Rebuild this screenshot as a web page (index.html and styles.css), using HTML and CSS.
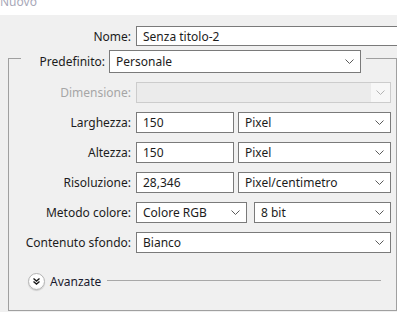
FILE: index.html
```html
<!DOCTYPE html>
<html lang="it">
<head>
<meta charset="utf-8">
<title>Nuovo</title>
<link rel="stylesheet" href="styles.css">
</head>
<body>
<div class="titlebar"><span class="title-text">Nuovo</span></div>

<div class="row nome-row">
  <span class="label nome-label">Nome:</span>
  <div class="field input nome-input">Senza titolo-2</div>
</div>

<div class="group">
  <div class="legend">
    <span class="label legend-label">Predefinito:</span>
    <div class="field select preset">
      <span class="value">Personale</span>
      <svg class="chev" width="9" height="5" viewBox="0 0 9 5"><path d="M0.5 0.5 L4.5 4.5 L8.5 0.5" fill="none" stroke="#5a5a5a" stroke-width="1"/></svg>
    </div>
  </div>

  <div class="rows">
    <div class="row">
      <span class="label disabled">Dimensione:</span>
      <div class="field select wide dis">
        <span class="value"></span>
        <span class="dis-arrow"><svg width="9" height="5" viewBox="0 0 9 5"><path d="M0.5 0.5 L4.5 4.5 L8.5 0.5" fill="none" stroke="#b4b4b4" stroke-width="1"/></svg></span>
      </div>
    </div>

    <div class="row">
      <span class="label">Larghezza:</span>
      <div class="field input num">150</div>
      <div class="field select unit">
        <span class="value">Pixel</span>
        <svg class="chev" width="9" height="5" viewBox="0 0 9 5"><path d="M0.5 0.5 L4.5 4.5 L8.5 0.5" fill="none" stroke="#5a5a5a" stroke-width="1"/></svg>
      </div>
    </div>

    <div class="row">
      <span class="label">Altezza:</span>
      <div class="field input num">150</div>
      <div class="field select unit">
        <span class="value">Pixel</span>
        <svg class="chev" width="9" height="5" viewBox="0 0 9 5"><path d="M0.5 0.5 L4.5 4.5 L8.5 0.5" fill="none" stroke="#5a5a5a" stroke-width="1"/></svg>
      </div>
    </div>

    <div class="row">
      <span class="label">Risoluzione:</span>
      <div class="field input num">28,346</div>
      <div class="field select unit">
        <span class="value">Pixel/centimetro</span>
        <svg class="chev" width="9" height="5" viewBox="0 0 9 5"><path d="M0.5 0.5 L4.5 4.5 L8.5 0.5" fill="none" stroke="#5a5a5a" stroke-width="1"/></svg>
      </div>
    </div>

    <div class="row">
      <span class="label">Metodo colore:</span>
      <div class="field select mode">
        <span class="value">Colore RGB</span>
        <svg class="chev" width="9" height="5" viewBox="0 0 9 5"><path d="M0.5 0.5 L4.5 4.5 L8.5 0.5" fill="none" stroke="#5a5a5a" stroke-width="1"/></svg>
      </div>
      <div class="field select bits">
        <span class="value">8 bit</span>
        <svg class="chev" width="9" height="5" viewBox="0 0 9 5"><path d="M0.5 0.5 L4.5 4.5 L8.5 0.5" fill="none" stroke="#5a5a5a" stroke-width="1"/></svg>
      </div>
    </div>

    <div class="row">
      <span class="label">Contenuto sfondo:</span>
      <div class="field select wide">
        <span class="value">Bianco</span>
        <svg class="chev" width="9" height="5" viewBox="0 0 9 5"><path d="M0.5 0.5 L4.5 4.5 L8.5 0.5" fill="none" stroke="#5a5a5a" stroke-width="1"/></svg>
      </div>
    </div>
  </div>

  <div class="advanced">
    <span class="adv-btn"><svg width="9" height="9" viewBox="0 0 9 9"><path d="M1.5 1.5 L4.5 4 L7.5 1.5 M1.5 4.5 L4.5 7 L7.5 4.5" fill="none" stroke="#1a1a1a" stroke-width="1.4"/></svg></span>
    <span class="adv-text">Avanzate</span>
    <span class="adv-line"></span>
  </div>
</div>
</body>
</html>
```

FILE: styles.css
```css
html, body {
  margin: 0;
  padding: 0;
}

body {
  width: 397px;
  height: 312px;
  overflow: hidden;
  background: #f0f0f0;
  font-family: "Noto Sans", "Open Sans", sans-serif;
  font-size: 12px;
  color: #1c1c1c;
}

.titlebar {
  height: 15px;
  background: #ffffff;
  overflow: hidden;
}

.title-text {
  display: block;
  margin-top: -6px;
  line-height: 16px;
  font-size: 12px;
  color: #a8a8b8;
}

.row {
  display: flex;
  align-items: center;
}

.label {
  flex: none;
  text-align: right;
  white-space: nowrap;
}

.label.disabled {
  color: #a6a6a6;
}

.nome-row {
  margin-top: 11px;
}

.nome-label {
  width: 131px;
  margin-right: 5px;
}

.field {
  flex: none;
  box-sizing: border-box;
  height: 21px;
  border: 1px solid #7a7a7a;
  background: #ffffff;
  display: flex;
  align-items: center;
  padding-left: 6px;
  white-space: nowrap;
  overflow: hidden;
}

.nome-input {
  height: 20px;
  width: 270px;
  border-right: none;
}

.select .value {
  flex: 1;
}

.select .chev {
  flex: none;
  margin-right: 6px;
}

.group {
  box-sizing: border-box;
  margin: 12px 0 0 8px;
  width: 389px;
  height: 253px;
  border: 1px solid #a0a0a0;
}

.legend {
  display: flex;
  align-items: center;
  width: max-content;
  margin: -9px 0 0 12px;
  padding: 0 5px;
  background: #f0f0f0;
}

.legend-label {
  width: 79px;
  margin-right: 4px;
}

.preset {
  width: 252px;
  height: 23px;
}

.rows {
  display: flex;
  flex-direction: column;
  gap: 9px;
  margin-top: 9px;
}

.rows .label {
  width: 122px;
  margin-right: 5px;
}

.wide {
  width: 255px;
}

.num {
  width: 98px;
  margin-right: 4px;
}

.unit {
  width: 153px;
}

.mode {
  width: 111px;
  margin-right: 7px;
}

.bits {
  width: 137px;
}

.field.dis {
  border-color: #cccccc;
  background: #ebebeb;
  padding-left: 0;
}

.dis-arrow {
  flex: none;
  align-self: stretch;
  width: 19px;
  background: #f7f7f7;
  display: flex;
  align-items: center;
  justify-content: center;
}

.advanced {
  display: flex;
  align-items: center;
  margin-top: 20px;
  height: 17px;
}

.adv-btn {
  flex: none;
  box-sizing: border-box;
  width: 17px;
  height: 17px;
  margin-left: 19px;
  border-radius: 50%;
  border: 1px solid #b4b4b4;
  background: radial-gradient(circle at 50% 40%, #ffffff 55%, #ececec 100%);
  box-shadow: 0 1px 1px rgba(0, 0, 0, 0.15);
  display: flex;
  align-items: center;
  justify-content: center;
}

.adv-text {
  margin-left: 5px;
  color: #1a1a2e;
}

.adv-line {
  flex: 1;
  height: 1px;
  margin: -2px 15px 0 6px;
  background: #a8a8a8;
}
```
